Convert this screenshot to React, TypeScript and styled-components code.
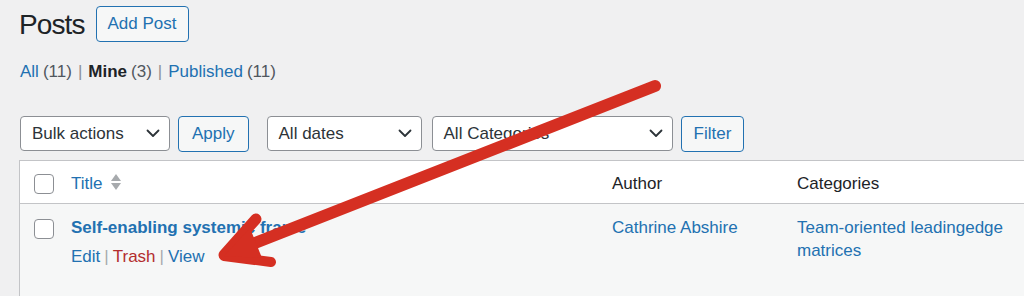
import React from "react";
import styled, { createGlobalStyle } from "styled-components";

const Global = createGlobalStyle`
  html, body { margin: 0; padding: 0; }
  body {
    background: #f0f0f1;
    font-family: "Liberation Sans", Arial, sans-serif;
    color: #1d2327;
    overflow: hidden;
    width: 1024px;
    height: 296px;
  }
`;

const Page = styled.div`
  position: relative;
  width: 1024px;
  height: 296px;
  padding-left: 19px;
  box-sizing: border-box;
  overflow: hidden;
`;

const Header = styled.div`
  display: flex;
  align-items: center;
  height: 48px;
`;

const Title = styled.h1`
  margin: 0;
  padding-top: 2px;
  font-size: 28px;
  font-weight: 400;
  line-height: 46px;
  color: #1d2327;
  letter-spacing: -0.9px;
`;

const OutlineButton = styled.button<{ $px?: number; $ml?: number }>`
  box-sizing: border-box;
  height: 36px;
  border: 1px solid #2271b1;
  border-radius: 4px;
  background: #f6f7f7;
  color: #2271b1;
  font-family: inherit;
  font-size: 17px;
  padding: 0 ${(p) => p.$px ?? 12}px;
  margin-left: ${(p) => p.$ml ?? 0}px;
  cursor: pointer;
`;

const Views = styled.div`
  display: flex;
  align-items: center;
  font-size: 17px;
  line-height: 24px;
  margin-top: 12px;
  margin-left: 1px;
`;

const ViewLink = styled.span<{ $current?: boolean }>`
  color: ${(p) => (p.$current ? "#1d2327" : "#2271b1")};
  font-weight: ${(p) => (p.$current ? 700 : 400)};
`;

const Count = styled.span`
  color: #50575e;
  margin-left: 4px;
`;

const Sep = styled.span`
  color: #8c8f94;
  margin: 0 6px;
`;

const Tablenav = styled.div`
  display: flex;
  align-items: center;
  margin-top: 32px;
  height: 35px;
  margin-left: 1px;
`;

const Select = styled.div<{ $w: number; $ml?: number }>`
  box-sizing: border-box;
  width: ${(p) => p.$w}px;
  height: 35px;
  margin-left: ${(p) => p.$ml ?? 0}px;
  border: 1px solid #8c8f94;
  border-radius: 4px;
  background: #fff;
  color: #2c3338;
  font-size: 17px;
  display: flex;
  align-items: center;
  justify-content: space-between;
  padding: 0 9px 0 11px;
`;

const Table = styled.div`
  margin-top: 9px;
  width: 1100px;
  border: 1px solid #c3c4c7;
  border-right: none;
  background: #fff;
`;

const Row = styled.div<{ $alt?: boolean }>`
  display: grid;
  grid-template-columns: 43px 541px 185px 230px;
  background: ${(p) => (p.$alt ? "#f6f7f7" : "#fff")};
`;

const HeadRow = styled(Row)`
  height: 43px;
  box-sizing: border-box;
  padding-top: 3px;
  align-items: center;
  border-bottom: 1px solid #c3c4c7;
  font-size: 17px;
`;

const BodyRow = styled(Row)`
  height: 120px;
  align-items: start;
  padding-top: 12px;
  box-sizing: border-box;
  font-size: 17px;
  line-height: 23px;
`;

const Cell = styled.div`
  padding: 0 8px;
  display: flex;
  flex-direction: column;
`;

const HeadCell = styled(Cell)`
  flex-direction: row;
  align-items: center;
  color: #1d2327;
`;

const CheckCell = styled.div<{ $top?: number }>`
  padding-left: 14px;
  padding-top: ${(p) => p.$top ?? 0}px;
`;

const Checkbox = styled.div`
  box-sizing: border-box;
  width: 20px;
  height: 20px;
  border: 1px solid #8c8f94;
  border-radius: 4px;
  background: #fff;
`;

const Link = styled.span<{ $bold?: boolean; $danger?: boolean }>`
  color: ${(p) => (p.$danger ? "#b32d2e" : "#2271b1")};
  font-weight: ${(p) => (p.$bold ? 700 : 400)};
`;

const Actions = styled.div`
  margin-top: 6px;
  display: flex;
  align-items: center;
`;

const ActSep = styled.span`
  color: #a7aaad;
  margin: 0 4px;
`;

const SortIcon = styled.svg`
  margin-left: 8px;
  margin-top: -3px;
`;

const ArrowLayer = styled.svg`
  position: absolute;
  left: 0;
  top: 0;
  pointer-events: none;
`;

const Chevron = () => (
  <svg width="14" height="9" viewBox="0 0 14 9">
    <polyline points="1.5,1.5 7,7 12.5,1.5" fill="none" stroke="#2c3338" strokeWidth="1.8" strokeLinecap="round" strokeLinejoin="round" />
  </svg>
);

export default function App() {
  return (
    <>
      <Global />
      <Page>
        <Header>
          <Title>Posts</Title>
          <OutlineButton $ml={11} $px={11}>Add Post</OutlineButton>
        </Header>
        <Views>
          <ViewLink>All</ViewLink>
          <Count>(11)</Count>
          <Sep>|</Sep>
          <ViewLink $current>Mine</ViewLink>
          <Count>(3)</Count>
          <Sep>|</Sep>
          <ViewLink>Published</ViewLink>
          <Count>(11)</Count>
        </Views>
        <Tablenav>
          <Select $w={150}>
            Bulk actions <Chevron />
          </Select>
          <OutlineButton $ml={8} $px={13}>Apply</OutlineButton>
          <Select $w={155} $ml={18}>
            All dates <Chevron />
          </Select>
          <Select $w={241} $ml={10}>
            All Categories <Chevron />
          </Select>
          <OutlineButton $ml={8} $px={12}>Filter</OutlineButton>
        </Tablenav>
        <Table>
          <HeadRow>
            <CheckCell>
              <Checkbox />
            </CheckCell>
            <HeadCell>
              <Link>Title</Link>
              <SortIcon width="10" height="18" viewBox="0 0 10 18">
                <polygon points="5,1 10,8 0,8" fill="#a7aaad" />
                <polygon points="0,10 10,10 5,17" fill="#a7aaad" />
              </SortIcon>
            </HeadCell>
            <HeadCell>Author</HeadCell>
            <HeadCell>Categories</HeadCell>
          </HeadRow>
          <BodyRow $alt>
            <CheckCell $top={3}>
              <Checkbox />
            </CheckCell>
            <Cell>
              <Link $bold>Self-enabling systemic frame</Link>
              <Actions>
                <Link>Edit</Link>
                <ActSep>|</ActSep>
                <Link $danger>Trash</Link>
                <ActSep>|</ActSep>
                <Link>View</Link>
              </Actions>
            </Cell>
            <Cell>
              <Link>Cathrine Abshire</Link>
            </Cell>
            <Cell>
              <Link>Team-oriented leadingedge matrices</Link>
            </Cell>
          </BodyRow>
        </Table>
        <ArrowLayer width="1024" height="296" viewBox="0 0 1024 296">
          <g stroke="#d52f22" strokeLinecap="round" strokeLinejoin="round" fill="none">
            <line x1="655" y1="86" x2="232" y2="252" strokeWidth="12" />
            <line x1="256" y1="219" x2="224" y2="255" strokeWidth="11" />
            <line x1="224" y1="256" x2="271" y2="262" strokeWidth="10" />
          </g>
          <polygon points="224,256 250,228 262,258" fill="#d52f22" />
        </ArrowLayer>
      </Page>
    </>
  );
}
